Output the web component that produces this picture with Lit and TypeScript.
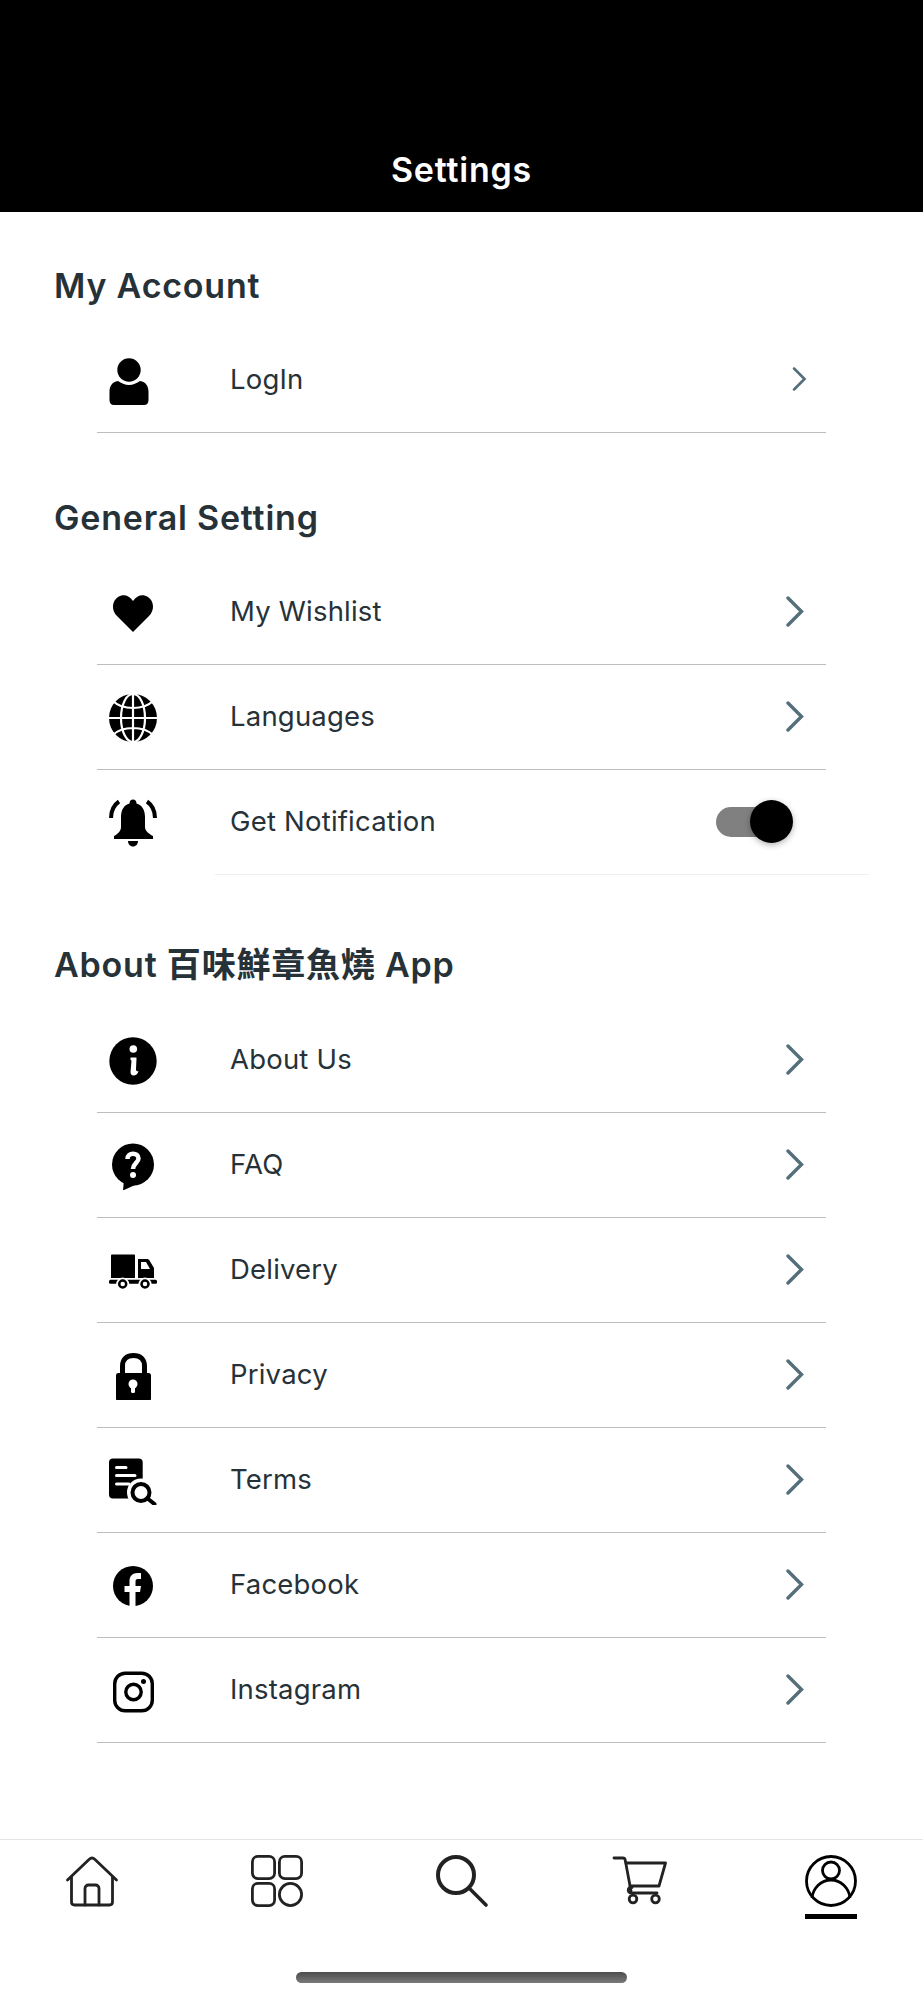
import { LitElement, html, css } from 'lit';
import { customElement, state } from 'lit/decorators.js';

const icons: Record<string, any> = {
  person: html`<svg class="icon" viewBox="0 0 48 48"><circle cx="20" cy="13" r="11.700"/><path d="M5 48C2 48 .5 46 .5 43V35C.5 29 3 25 9 24C12 26 16 28 20 28C24 28 28 26 31 24C37 25 39.500 29 39.500 35V43C39.500 46 38 48 35 48Z"/></svg>`,
  heart: html`<svg class="icon" viewBox="0 0 48 48"><path d="M24 43L8 27C2 21 3 12 9 8C14 5 20 6 24 12C28 6 34 5 39 8C45 12 46 21 40 27Z"/></svg>`,
  globe: html`<svg class="icon" viewBox="0 0 48 48"><circle cx="24" cy="24" r="24"/><g fill="none" stroke="#fff" stroke-width="2.200"><ellipse cx="24" cy="24" rx="12" ry="24"/><path d="M24 0V48M0 24H48M4 7C10 13 17 14 24 14C31 14 38 13 44 7M4 41C10 35 17 34 24 34C31 34 38 35 44 41"/></g></svg>`,
  bell: html`<svg class="icon" viewBox="0 0 48 48"><path d="M24 .5C26 .5 27.500 2 27.500 4.500C33 6 36 11 36 18V28C36 32 40 35 44 37V40H5V37C9 35 12 32 12 28V18C12 11 15 6 20.500 4.500C20.500 2 22 .5 24 .5Z"/><path d="M19 42H29C29 45 27 47.500 24 47.500C21 47.500 19 45 19 42Z"/><path d="M2 19C2 12 5 6 10 2.500M46 19C46 12 43 6 38 2.500" fill="none" stroke="#000" stroke-width="4"/></svg>`,
  info: html`<svg class="icon" viewBox="0 0 48 48"><circle cx="24" cy="24" r="23.700"/><circle cx="24.300" cy="12" r="3.800" fill="#fff"/><path d="M21.500 20.500H27C27.500 20.500 27.500 21 27.500 21.500L27 32C27 34 28 34.500 29.500 34C29 37 26.500 38.500 24.500 38.500C22.500 38.500 21.500 37 21.500 35L22.500 24C22.500 23.500 22 23 21.500 23Z" fill="#fff"/></svg>`,
  faq: html`<svg class="icon" viewBox="0 0 48 48"><circle cx="24" cy="22.500" r="21"/><path d="M14 48.500L15 38L26 43Z"/><path d="M18.500 17C18.500 10 29.500 10 29.500 16.500C29.500 20.500 24 21.500 24 27" fill="none" stroke="#fff" stroke-width="4.500"/><circle cx="24" cy="33" r="3" fill="#fff"/></svg>`,
  truck: html`<svg class="icon" viewBox="0 0 48 48"><path d="M3 7.500H25C25.500 7.500 26 8 26 8.500V31H2V8.500C2 8 2.500 7.500 3 7.500Z"/><path fill-rule="evenodd" d="M29 12H38C39 12 40 12.500 40.500 13.500L45 21V31H29ZM32 15V22H41L37 15Z"/><rect x="0" y="32.800" width="48" height="4" rx="1.500"/><g fill="#fff"><circle cx="13.700" cy="37" r="6.500"/><circle cx="36" cy="37" r="6.500"/></g><g fill="#fff" stroke="#000" stroke-width="2.500"><circle cx="13.700" cy="37" r="3.500"/><circle cx="36" cy="37" r="3.500"/></g></svg>`,
  lock: html`<svg class="icon" viewBox="0 0 48 48"><path d="M13.500 23V14C13.500 7 18 3.500 24.500 3.500C31 3.500 35.500 7 35.500 14V23" fill="none" stroke="#000" stroke-width="5"/><rect x="7" y="21" width="35" height="28" rx="2.500"/><circle cx="24" cy="32" r="4.500" fill="#fff"/><rect x="22" y="32" width="4" height="9" rx="1.500" fill="#fff"/></svg>`,
  terms: html`<svg class="icon" viewBox="0 0 48 48"><rect x="0" y="1.500" width="33.700" height="40" rx="4"/><path d="M7.500 10.500H17M7.500 18.500H26M7.500 27H20" stroke="#fff" stroke-width="3" stroke-linecap="round"/><circle cx="32" cy="35.500" r="14" fill="#fff"/><circle cx="32" cy="35.500" r="8.500" fill="#fff" stroke="#000" stroke-width="4"/><path d="M38.500 41.500L45.500 47" stroke="#000" stroke-width="4" stroke-linecap="round"/></svg>`,
  facebook: html`<svg class="icon" viewBox="0 0 48 48"><circle cx="24" cy="24" r="20"/><path d="M20.500 44.500V30H15.500V24H20.500V19C20.500 14 23.500 11 28.500 11H32V17H29C27 17 26.500 18 26.500 20V24H32L31 30H26.500V44.500Z" fill="#fff"/></svg>`,
  instagram: html`<svg class="icon" viewBox="0 0 48 48"><rect x="5.700" y="6.200" width="37.600" height="37.600" rx="10.500" fill="none" stroke="#000" stroke-width="3.400"/><circle cx="24.500" cy="25" r="7.700" fill="none" stroke="#000" stroke-width="3.400"/><circle cx="34.500" cy="14.500" r="2.500"/></svg>`,
};

const nav = [
  html`<svg class="nav-icon" viewBox="0 0 52 52"><g fill="none" stroke="#222" stroke-width="2.800" stroke-linecap="round" stroke-linejoin="round"><path d="M1.500 25L23 4.500C24.800 2.800 27.200 2.800 29 4.500L50.500 25"/><path d="M5.500 22V47C5.500 49 7 50 8.500 50H43.500C45 50 46.500 49 46.500 47V22"/><path d="M19 50V33.500C19 31.500 20.500 30 22.500 30H29.500C31.500 30 33 31.500 33 33.500V50"/></g></svg>`,
  html`<svg class="nav-icon" viewBox="0 0 52 52"><g fill="none" stroke="#222" stroke-width="2.800"><rect x="1.400" y="1.400" width="22.200" height="22.200" rx="5.500"/><rect x="28.400" y="1.400" width="22.200" height="22.200" rx="5.500"/><rect x="1.400" y="28.400" width="22.200" height="22.200" rx="5.500"/><circle cx="39.500" cy="39.500" r="11.100"/></g></svg>`,
  html`<svg class="nav-icon" viewBox="0 0 52 52"><g fill="none" stroke="#222" stroke-width="4" stroke-linecap="round"><circle cx="20" cy="20" r="18"/><path d="M33 33L50 50" stroke-width="3.600"/></g></svg>`,
  html`<svg class="nav-icon" viewBox="0 0 52 52"><g fill="none" stroke="#222" stroke-width="2.800" stroke-linecap="round" stroke-linejoin="round"><path d="M-6 3H3C4 3 5 4 5.200 5L11 36"/><path d="M6 8H45.500L39 31H10"/><path d="M37 38H12C7 38 7 32.500 12 32.500"/></g><g fill="none" stroke="#222" stroke-width="2.800"><circle cx="13" cy="44" r="3.800"/><circle cx="35.500" cy="44" r="3.800"/></g></svg>`,
  html`<svg class="nav-icon" viewBox="0 0 52 52"><g fill="none" stroke="#000" stroke-width="2.800"><circle cx="26" cy="26" r="24.500"/><circle cx="26" cy="15.500" r="8.500"/><path d="M7 43C8 33 16 25 26 25C36 25 44 33 45 43"/></g></svg>`,
];

const chevron = (small = false) => html`<svg class=${small ? 'chevron small' : 'chevron'} viewBox="0 0 18 31"><path d="M2 2L15.500 15.500L2 29" fill="none" stroke="#546e7a" stroke-width="3.400" stroke-linecap="round"/></svg>`;

@customElement('app-root')
export class AppRoot extends LitElement {
  @state()
  notify = true;

  static styles = css`
    :host {
      display: block;
      font-family: Inter, 'Noto Sans CJK TC', sans-serif;
      color: #263238;
    }
    .page {
      display: flex;
      flex-direction: column;
      height: 2000px;
      background: #fff;
    }
    header {
      height: 212px;
      box-sizing: border-box;
      background: #000;
      color: #fff;
      display: flex;
      justify-content: center;
      align-items: flex-end;
      padding-bottom: 23px;
      font-size: 34px;
      font-weight: 600;
      line-height: 38px;
      letter-spacing: 0.8px;
    }
    main {
      flex: 1;
      padding-top: 33px;
    }
    section {
      margin-bottom: 44px;
    }
    section.notify {
      margin-bottom: 48px;
    }
    h2 {
      margin: 0;
      height: 83px;
      padding-left: 54px;
      font-size: 34px;
      font-weight: 600;
      line-height: 82px;
      letter-spacing: 0.8px;
    }
    section.about h2 {
      height: 85px;
      line-height: 84px;
    }
    .row {
      display: flex;
      align-items: center;
      height: 105px;
      box-sizing: border-box;
      margin: 0 97px;
      padding: 0 0 2px 12px;
      border-bottom: 1px solid #bdbdbd;
      font-size: 27.5px;
      letter-spacing: 0.2px;
    }
    .row.plain {
      height: 104px;
      border-bottom: none;
    }
    .icon {
      width: 48px;
      height: 48px;
      margin-top: 3px;
      margin-right: 73px;
      flex: none;
    }
    .chevron {
      width: 18px;
      height: 31px;
      margin-left: auto;
      margin-right: 22px;
    }
    .chevron.small {
      width: 15px;
      height: 24px;
      margin-right: 19px;
    }
    .light-rule {
      height: 1px;
      margin: 0 54px 0 215px;
      background: #eeeeee;
    }
    .toggle {
      position: relative;
      width: 71px;
      height: 30px;
      margin-top: 2px;
      margin-left: auto;
      margin-right: 39px;
      border-radius: 15px;
      background: #808080;
    }
    .thumb {
      position: absolute;
      top: -7px;
      right: -6px;
      width: 43px;
      height: 43px;
      border-radius: 50%;
      background: #000;
      box-shadow: 0 2px 6px rgba(0, 0, 0, 0.3);
    }
    nav {
      border-top: 1px solid #e4e4e4;
      height: 161px;
      box-sizing: border-box;
      padding-top: 15px;
    }
    .nav-row {
      display: flex;
      justify-content: space-between;
      padding: 0 66px;
    }
    .nav-item {
      width: 52px;
      height: 64px;
      box-sizing: border-box;
    }
    .nav-item.active {
      border-bottom: 5px solid #000;
    }
    .nav-icon {
      display: block;
      width: 52px;
      height: 52px;
      overflow: visible;
    }
    .home-bar {
      width: 331px;
      height: 11px;
      margin: 53px auto 0;
      border-radius: 6px;
      background: linear-gradient(180deg, #4c4c4c, #7a7a7a);
    }
  `;

  private _row(icon: string, label: string) {
    return html`<div class="row">${icons[icon]}<span>${label}</span>${chevron()}</div>`;
  }

  render() {
    return html`
      <div class="page">
        <header>Settings</header>
        <main>
          <section>
            <h2>My Account</h2>
            <div class="row">${icons.person}<span>LogIn</span>${chevron(true)}</div>
          </section>
          <section class="notify">
            <h2>General Setting</h2>
            ${this._row('heart', 'My Wishlist')}
            ${this._row('globe', 'Languages')}
            <div class="row plain">
              ${icons.bell}<span>Get Notification</span>
              <div class="toggle"><div class="thumb"></div></div>
            </div>
            <div class="light-rule"></div>
          </section>
          <section class="about">
            <h2>About 百味鮮章魚燒 App</h2>
            ${this._row('info', 'About Us')}
            ${this._row('faq', 'FAQ')}
            ${this._row('truck', 'Delivery')}
            ${this._row('lock', 'Privacy')}
            ${this._row('terms', 'Terms')}
            ${this._row('facebook', 'Facebook')}
            ${this._row('instagram', 'Instagram')}
          </section>
        </main>
        <nav>
          <div class="nav-row">
            ${nav.map((n, i) => html`<div class=${i === 4 ? 'nav-item active' : 'nav-item'}>${n}</div>`)}
          </div>
          <div class="home-bar"></div>
        </nav>
      </div>
    `;
  }
}
